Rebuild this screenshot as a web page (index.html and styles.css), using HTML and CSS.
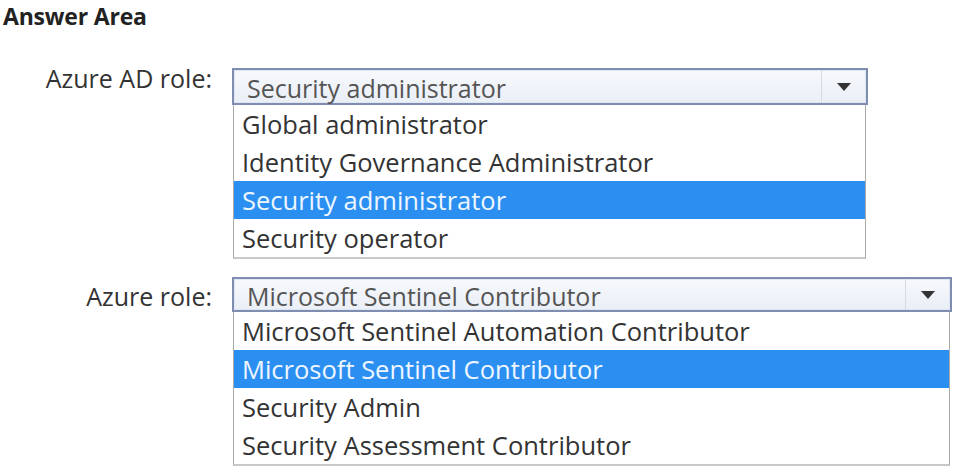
FILE: index.html
```html
<!DOCTYPE html>
<html>
<head>
<meta charset="utf-8">
<link rel="stylesheet" href="styles.css">
</head>
<body>
<div class="page">
  <h1 class="title">Answer Area</h1>
  <div class="row row-ad">
    <div class="label label-ad">Azure AD role:</div>
    <div class="dropdown dd-ad">
      <div class="select">
        <span class="value">Security administrator</span>
        <span class="btn"><svg width="14" height="8" viewBox="0 0 14 8"><path d="M0 0H14L7 8Z" fill="#333"/></svg></span>
      </div>
      <ul class="list">
        <li>Global administrator</li>
        <li>Identity Governance Administrator</li>
        <li class="sel">Security administrator</li>
        <li>Security operator</li>
      </ul>
    </div>
  </div>
  <div class="row row-az">
    <div class="label label-az">Azure role:</div>
    <div class="dropdown dd-az">
      <div class="select">
        <span class="value">Microsoft Sentinel Contributor</span>
        <span class="btn"><svg width="14" height="8" viewBox="0 0 14 8"><path d="M0 0H14L7 8Z" fill="#333"/></svg></span>
      </div>
      <ul class="list">
        <li>Microsoft Sentinel Automation Contributor</li>
        <li class="sel">Microsoft Sentinel Contributor</li>
        <li>Security Admin</li>
        <li>Security Assessment Contributor</li>
      </ul>
    </div>
  </div>
</div>
</body>
</html>
```
FILE: styles.css
```css
html, body {
  margin: 0;
  padding: 0;
  background: #fff;
}
.page {
  font-family: "Open Sans", "Noto Sans", sans-serif;
  color: #3a3a3a;
  width: 959px;
  height: 468px;
  overflow: hidden;
}
.title {
  margin: 0;
  padding: 0 0 0 3px;
  font-size: 23px;
  line-height: normal;
  font-weight: 700;
  letter-spacing: -0.2px;
  color: #222;
}
.row {
  display: flex;
  align-items: flex-start;
}
.row-ad {
  margin-top: 36px;
}
.row-az {
  margin-top: 18px;
}
.label {
  width: 212px;
  text-align: right;
  font-size: 25px;
  color: #333;
  box-sizing: border-box;
  white-space: nowrap;
}
.label-ad {
  padding-top: 0;
  line-height: 20px;
}
.label-az {
  padding-top: 6px;
  line-height: 26px;
}
.dropdown {
  margin-left: 20px;
}
.dd-ad {
  width: 636px;
}
.dd-az {
  width: 720px;
}
.select {
  height: 37px;
  box-sizing: border-box;
  border: 2px solid #7f8db0;
  box-shadow: inset 0 0 0 1px #dfe6f2;
  background: linear-gradient(#f6f8fc, #eaeff6);
  display: flex;
  align-items: center;
  font-size: 25px;
  color: #555;
}
.dd-az .select {
  height: 35px;
}
.value {
  flex: 1;
  padding-left: 13px;
  line-height: 30px;
  padding-top: 2px;
  white-space: nowrap;
}
.btn {
  width: 44px;
  align-self: stretch;
  border-left: 1px solid #d6dbe3;
  display: flex;
  align-items: center;
  justify-content: center;
}
.list {
  list-style: none;
  margin: 0 0 0 1px;
  padding: 0;
  width: calc(100% - 3px);
  box-sizing: border-box;
  border: 1px solid #a9a9a9;
  border-top: none;
  border-bottom: 2px solid #c8c8c8;
  background: #fff;
}
.list li {
  height: 38px;
  line-height: 38px;
  padding-left: 8px;
  font-size: 25.5px;
  color: #333;
  white-space: nowrap;
}
.list li.sel {
  background: #2b8ff2;
  color: #eef6ff;
}
```
